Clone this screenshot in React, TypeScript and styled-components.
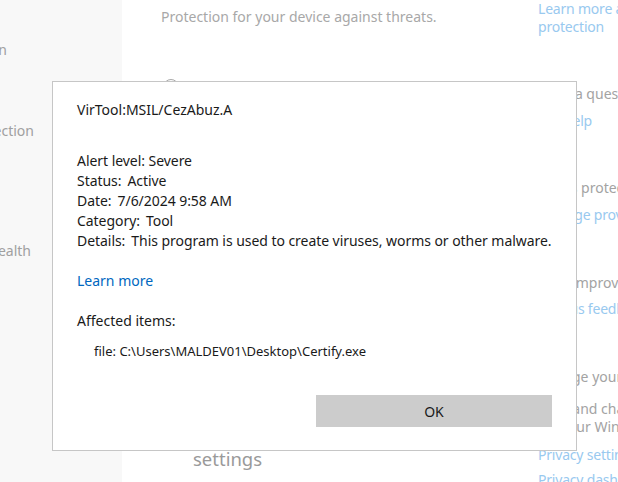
import React from "react";
import styled, { createGlobalStyle } from "styled-components";

const Global = createGlobalStyle`
  html, body { margin: 0; padding: 0; background: #ffffff; }
  body { font-family: "Noto Sans", "Liberation Sans", sans-serif; }
  * { box-sizing: border-box; }
`;

const Page = styled.div`
  position: relative;
  width: 618px;
  height: 482px;
  overflow: hidden;
  display: flex;
  background: #ffffff;
`;

const Sidebar = styled.nav`
  width: 122px;
  flex: none;
  background: #f8f8f8;
  overflow: hidden;
  display: flex;
  flex-direction: column;
`;

const SideItem = styled.div<{ $end: number; $top: number }>`
  margin-top: ${(p) => p.$top}px;
  margin-left: ${(p) => p.$end - 300}px;
  width: 300px;
  flex: none;
  text-align: right;
  white-space: nowrap;
  font-size: 14px;
  line-height: 20px;
  color: #a0a0a0;
`;

const Main = styled.main`
  flex: 1;
  display: flex;
  padding-left: 39px;
`;

const LeftCol = styled.section`
  width: 377px;
  flex: none;
  display: flex;
  flex-direction: column;
  padding-top: 6px;
`;

const Intro = styled.p`
  margin: 0;
  font-size: 14px;
  line-height: 22px;
  color: #a8a8a8;
  white-space: nowrap;
`;

const SectionIcon = styled.svg<{ $top: number }>`
  display: block;
  margin-top: ${(p) => p.$top}px;
  margin-left: 1px;
  flex: none;
`;

const SettingsHead = styled.div`
  margin-top: auto;
  margin-bottom: 10px;
  display: flex;
  align-items: flex-start;
  gap: 8px;
`;

const SettingsIcon = styled.svg`
  display: block;
  flex: none;
  margin-top: -19px;
`;

const SettingsTitle = styled.h2`
  margin: 0;
  font-weight: 400;
  font-size: 18.5px;
  line-height: 26px;
  color: #9a9a9a;
`;

const RightCol = styled.aside`
  flex: none;
  display: flex;
  flex-direction: column;
  white-space: nowrap;
`;

const Group = styled.div<{ $top: number }>`
  margin-top: ${(p) => p.$top}px;
  display: flex;
  flex-direction: column;
`;

const Heading = styled.div<{ $gap?: number }>`
  margin-top: ${(p) => p.$gap ?? 0}px;
  font-size: 14px;
  line-height: 18px;
  color: #a3a3a3;
`;

const SideLink = styled.a<{ $gap?: number }>`
  margin-top: ${(p) => p.$gap ?? 0}px;
  font-size: 14px;
  line-height: 18px;
  letter-spacing: -0.2px;
  color: #99c9ef;
  text-decoration: none;
`;

const Dialog = styled.div`
  position: absolute;
  left: 52px;
  top: 81px;
  width: 525px;
  height: 370px;
  background: #ffffff;
  border: 1px solid #c6c6c6;
  display: flex;
  flex-direction: column;
  padding: 18px 24px 23px 24px;
  color: #1a1a1a;
`;

const Title = styled.div`
  font-size: 14px;
  line-height: 20px;
`;

const Details = styled.div`
  margin-top: 31px;
  display: flex;
  flex-direction: column;
`;

const Line = styled.div`
  font-size: 14px;
  line-height: 20px;
  white-space: nowrap;
  letter-spacing: -0.05px;
`;

const Value = styled.span`
  margin-left: 6px;
`;

const LearnMore = styled.a`
  margin-top: 20px;
  font-size: 14px;
  line-height: 20px;
  color: #0067c0;
  text-decoration: none;
  align-self: flex-start;
`;

const Affected = styled.div`
  margin-top: 20px;
  font-size: 14px;
  line-height: 20px;
`;

const FileLine = styled.div`
  margin-top: 10px;
  padding-left: 17px;
  font-size: 13px;
  line-height: 20px;
`;

const Footer = styled.div`
  margin-top: auto;
  display: flex;
  justify-content: flex-end;
`;

const OkButton = styled.button`
  width: 236px;
  height: 32px;
  border: none;
  background: #cccccc;
  font-family: inherit;
  font-size: 14px;
  color: #1a1a1a;
  padding: 0;
`;

export default function App() {
  return (
    <>
      <Global />
      <Page>
        <Sidebar>
          <SideItem $top={40} $end={7}>Virus &amp; threat protection</SideItem>
          <SideItem $top={61} $end={34}>Account protection</SideItem>
          <SideItem $top={100} $end={31}>Device performance &amp; health</SideItem>
        </Sidebar>
        <Main>
          <LeftCol>
            <Intro>Protection for your device against threats.</Intro>
            <SectionIcon $top={50} width="18" height="18" viewBox="0 0 18 18" aria-hidden="true">
              <circle cx="9" cy="9" r="7.5" fill="none" stroke="#a8a8a8" strokeWidth="1" />
            </SectionIcon>
            <SettingsHead>
              <SettingsIcon width="24" height="24" viewBox="0 0 24 24" aria-hidden="true">
                <path d="M4 3 L12 1 L20 3 V11 C20 17 17 20 16 23" fill="none" stroke="#5cb85c" strokeWidth="1.5" />
              </SettingsIcon>
              <SettingsTitle>settings</SettingsTitle>
            </SettingsHead>
          </LeftCol>
          <RightCol>
            <SideLink>Learn more about</SideLink>
            <SideLink>protection</SideLink>
            <Group $top={49}>
              <Heading>Have a question?</Heading>
              <SideLink $gap={9}>Get help</SideLink>
            </Group>
            <Group $top={49}>
              <Heading>Who's protecting me?</Heading>
              <SideLink $gap={9}>Manage providers</SideLink>
            </Group>
            <Group $top={50}>
              <Heading>Help improve Microsoft Defender</Heading>
              <SideLink $gap={8}>Give us feedback</SideLink>
            </Group>
            <Group $top={50}>
              <Heading>Change your privacy settings</Heading>
              <Heading $gap={14}>View and change privacy settings</Heading>
              <Heading>for your Windows 10 device.</Heading>
              <SideLink $gap={10}>Privacy settings</SideLink>
              <SideLink $gap={7}>Privacy dashboard</SideLink>
            </Group>
          </RightCol>
        </Main>
        <Dialog role="dialog">
          <Title>VirTool:MSIL/CezAbuz.A</Title>
          <Details>
            <Line>Alert level: Severe</Line>
            <Line>Status:<Value>Active</Value></Line>
            <Line>Date:<Value>7/6/2024 9:58 AM</Value></Line>
            <Line>Category:<Value>Tool</Value></Line>
            <Line>Details:<Value>This program is used to create viruses, worms or other malware.</Value></Line>
          </Details>
          <LearnMore href="#">Learn more</LearnMore>
          <Affected>Affected items:</Affected>
          <FileLine>file: C:\Users\MALDEV01\Desktop\Certify.exe</FileLine>
          <Footer>
            <OkButton>OK</OkButton>
          </Footer>
        </Dialog>
      </Page>
    </>
  );
}
